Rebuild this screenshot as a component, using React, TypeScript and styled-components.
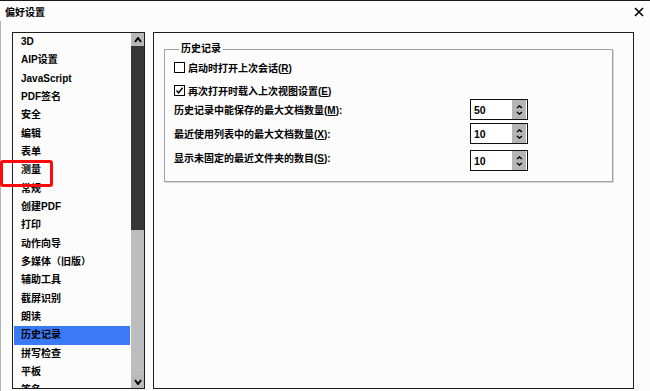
import React from "react";
import styled, { createGlobalStyle } from "styled-components";

const GlobalStyle = createGlobalStyle`
  html, body { margin: 0; padding: 0; background: #fcfcfc; }
  body {
    font-family: "Liberation Sans", "Noto Sans CJK SC", sans-serif;
    color: #000;
  }
  * { box-sizing: border-box; }
`;

const Window = styled.div`
  position: relative;
  width: 650px;
  height: 391px;
  overflow: hidden;
  background: #fcfcfc;
  border-top: 1px solid #1a1a1a;
`;

const TitleBar = styled.div`
  height: 20px;
  display: flex;
  align-items: center;
  justify-content: space-between;
  padding: 0 5px 0 5px;
`;

const Title = styled.span`
  font-size: 10px;
  font-weight: 700;
`;

const CloseButton = styled.div`
  width: 12px;
  height: 12px;
  display: flex;
  align-items: center;
  justify-content: center;
  margin-top: 2px;
`;

const Body = styled.div`
  display: flex;
  gap: 8px;
  padding: 11px 0 0 11px;
  border-left: 1px solid #b4b4b4;
  height: 370px;
`;

const ListPanel = styled.div`
  flex: none;
  width: 133px;
  height: 357px;
  border: 1px solid #1e1e1e;
  display: flex;
  overflow: hidden;
`;

const Items = styled.div`
  flex: 1;
  overflow: hidden;
  padding: 0 1px;
`;

const Item = styled.div<{ $selected?: boolean }>`
  height: 18.33px;
  line-height: 18.33px;
  padding-left: 7px;
  white-space: nowrap;
  font-size: 10px;
  font-weight: 700;
  background: ${(p) => (p.$selected ? "#3b7af6" : "transparent")};
`;

const Scrollbar = styled.div`
  flex: none;
  width: 13px;
  display: flex;
  flex-direction: column;
  background: #bdbdbd;
`;

const ScrollButton = styled.div`
  height: 13px;
  display: flex;
  align-items: center;
  justify-content: center;
  background: #b9b9b9;
`;

const Thumb = styled.div`
  height: 184px;
  background: #363636;
`;

const Track = styled.div`
  flex: 1;
`;

const RightPanel = styled.div`
  flex: none;
  width: 481px;
  height: 357px;
  border: 1px solid #1e1e1e;
`;

const Group = styled.fieldset`
  margin: 10px 20px 0 10px;
  padding: 0 0 10px 9px;
  border: 1px solid #a2a2a2;
  box-shadow: 1px 1px 0 #d6d6d6;
  min-width: 0;
  display: flex;
  flex-direction: column;
`;

const Legend = styled.legend`
  padding: 0 2px;
  margin-left: 5px;
  font-size: 10px;
  font-weight: 700;
  line-height: 12px;
`;

const Row = styled.div<{ $h: number; $top: number }>`
  display: flex;
  align-items: center;
  height: ${(p) => p.$h}px;
  margin-top: ${(p) => p.$top}px;
`;

const Label = styled.span<{ $shift?: number }>`
  font-size: 10px;
  font-weight: 700;
  white-space: nowrap;
  transform: translateY(${(p) => p.$shift ?? 0}px);
`;

const Box = styled.span`
  flex: none;
  width: 11px;
  height: 11px;
  border: 1.3px solid #000;
  background: #fff;
  margin-right: 3px;
  display: flex;
  align-items: center;
  justify-content: center;
`;

const Spin = styled.div`
  flex: none;
  margin-left: auto;
  margin-right: 84px;
  width: 58px;
  height: 21px;
  border: 1.3px solid #111;
  background: #fff;
  display: flex;
  align-items: stretch;
`;

const SpinValue = styled.span`
  flex: 1;
  padding-left: 3px;
  font-size: 10.5px;
  font-weight: 700;
  display: flex;
  align-items: center;
`;

const SpinButtons = styled.div`
  flex: none;
  width: 14px;
  margin: 0 1px 0 0;
  background: #b5b5b5;
  display: flex;
  flex-direction: column;
  align-items: center;
  justify-content: center;
  gap: 2px;
`;

const Highlight = styled.div`
  position: absolute;
  left: 0;
  top: 159px;
  width: 53px;
  height: 27px;
  border: 3px solid #ff0a0a;
  border-radius: 3px;
  pointer-events: none;
`;

const ChevUp = ({ w = 8, h = 6, sw = 2 }: { w?: number; h?: number; sw?: number }) => (
  <svg width={w} height={h} viewBox={`0 0 ${w} ${h}`}>
    <path d={`M1 ${h - 1} L${w / 2} 1 L${w - 1} ${h - 1}`} stroke="#000" strokeWidth={sw} fill="none" />
  </svg>
);

const ChevDown = ({ w = 8, h = 6, sw = 2 }: { w?: number; h?: number; sw?: number }) => (
  <svg width={w} height={h} viewBox={`0 0 ${w} ${h}`}>
    <path d={`M1 1 L${w / 2} ${h - 1} L${w - 1} 1`} stroke="#000" strokeWidth={sw} fill="none" />
  </svg>
);

const items = [
  "3D",
  "AIP设置",
  "JavaScript",
  "PDF签名",
  "安全",
  "编辑",
  "表单",
  "测量",
  "常规",
  "创建PDF",
  "打印",
  "动作向导",
  "多媒体（旧版）",
  "辅助工具",
  "截屏识别",
  "朗读",
  "历史记录",
  "拼写检查",
  "平板",
  "签名",
];

const SpinBox = ({ value }: { value: string }) => (
  <Spin>
    <SpinValue>{value}</SpinValue>
    <SpinButtons>
      <ChevUp w={7} h={4} sw={1.4} />
      <ChevDown w={7} h={4} sw={1.4} />
    </SpinButtons>
  </Spin>
);

export default function App() {
  return (
    <>
      <GlobalStyle />
      <Window>
        <TitleBar>
          <Title>偏好设置</Title>
          <CloseButton>
            <svg width="10" height="10" viewBox="0 0 10 10">
              <path d="M1 1 L9 9 M9 1 L1 9" stroke="#000" strokeWidth="1.6" />
            </svg>
          </CloseButton>
        </TitleBar>
        <Body>
          <ListPanel>
            <Items>
              {items.map((it) => (
                <Item key={it} $selected={it === "历史记录"}>
                  {it}
                </Item>
              ))}
            </Items>
            <Scrollbar>
              <ScrollButton>
                <ChevUp />
              </ScrollButton>
              <Thumb />
              <Track />
              <ScrollButton>
                <ChevDown />
              </ScrollButton>
            </Scrollbar>
          </ListPanel>
          <RightPanel>
            <Group>
              <Legend>历史记录</Legend>
              <Row $h={14} $top={5}>
                <Box />
                <Label>
                  启动时打开上次会话(<u>R</u>)
                </Label>
              </Row>
              <Row $h={14} $top={9}>
                <Box>
                  <svg width="9" height="9" viewBox="0 0 9 9">
                    <path d="M1.5 4.5 L3.6 6.8 L7.6 1.8" stroke="#000" strokeWidth="1.4" fill="none" />
                  </svg>
                </Box>
                <Label>
                  再次打开时载入上次视图设置(<u>E</u>)
                </Label>
              </Row>
              <Row $h={21} $top={2}>
                <Label>
                  历史记录中能保存的最大文档数量(<u>M</u>):
                </Label>
                <SpinBox value="50" />
              </Row>
              <Row $h={21} $top={3}>
                <Label>
                  最近使用列表中的最大文档数量(<u>X</u>):
                </Label>
                <SpinBox value="10" />
              </Row>
              <Row $h={21} $top={6}>
                <Label $shift={-3}>
                  显示未固定的最近文件夹的数目(<u>S</u>):
                </Label>
                <SpinBox value="10" />
              </Row>
            </Group>
          </RightPanel>
        </Body>
        <Highlight />
      </Window>
    </>
  );
}
